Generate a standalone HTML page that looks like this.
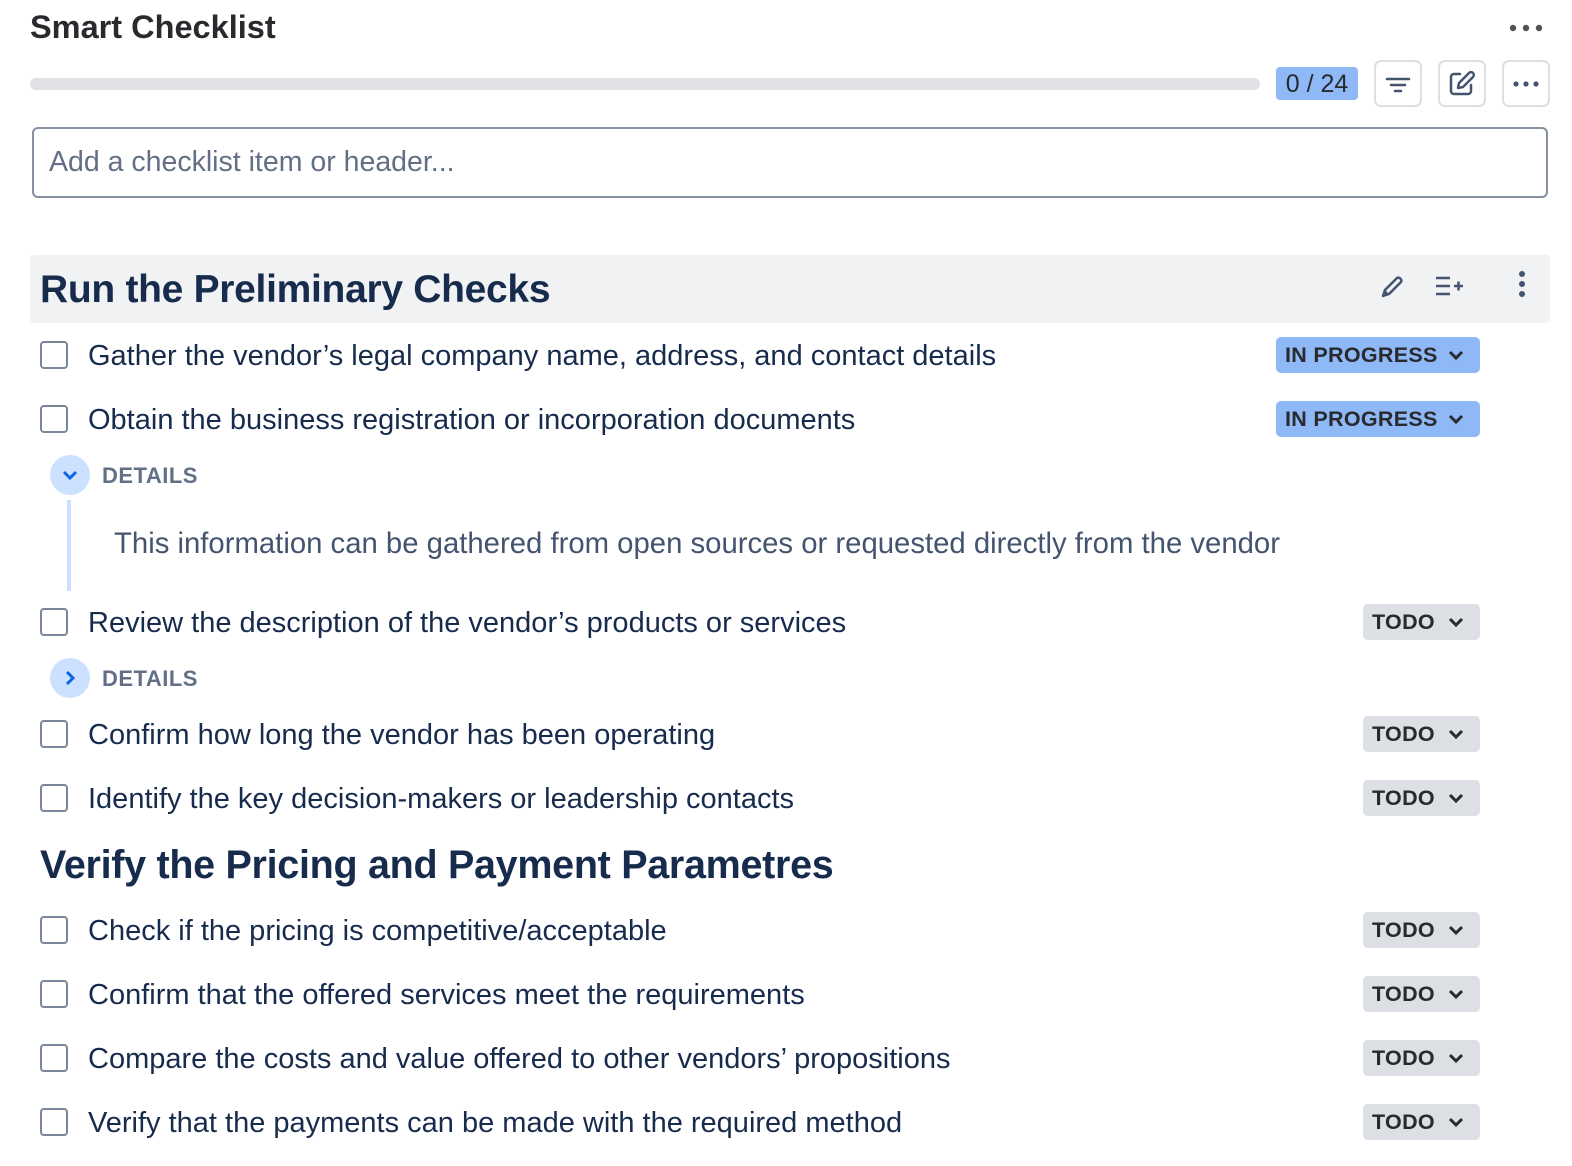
<!DOCTYPE html>
<html style="overflow:hidden"><head><meta charset="utf-8"><style>
*{box-sizing:border-box;margin:0;padding:0}
html,body{overflow:hidden}
body{width:1572px;height:1166px;background:#fff;font-family:"Liberation Sans",sans-serif;position:relative;color:#172b4d}
.a{position:absolute}
.t{position:absolute;left:88px;font-size:29px;line-height:38px;color:#172b4d;white-space:nowrap}
.cb{position:absolute;left:40px;width:28px;height:28px;border:2px solid #7a8699;border-radius:4px}
.bd{position:absolute;height:36px;border-radius:5px;font-weight:bold;font-size:21.5px;line-height:37px;color:#292a2e;padding-left:9px;letter-spacing:0.3px;white-space:nowrap}
.bd svg{position:absolute;right:16px;top:12px}
.todo{left:1363px;width:117px;background:#dcdfe4}
.ip{left:1276px;width:204px;background:#8fb8f6}
.btn{position:absolute;top:60px;width:48px;height:47px;border:2px solid #dcdfe4;border-radius:7px}
.det{position:absolute;left:102px;font-weight:bold;font-size:22px;color:#626f86;letter-spacing:0.5px;line-height:32px}
.circ{position:absolute;left:50px;width:40px;height:40px;border-radius:50%;background:#cce0ff}
h2{position:absolute;left:40px;font-size:39px;font-weight:bold;color:#172b4d;white-space:nowrap;letter-spacing:-0.3px}
</style></head><body>
<div class="a" style="left:30px;top:9px;font-size:32.5px;font-weight:bold;color:#292a2e">Smart Checklist</div>
<svg class="a" style="left:1506px;top:20px" width="40" height="16"><circle cx="7" cy="8" r="3.2" fill="#505258"/><circle cx="20" cy="8" r="3.2" fill="#505258"/><circle cx="33" cy="8" r="3.2" fill="#505258"/></svg>
<div class="a" style="left:30px;top:78px;width:1230px;height:12px;background:#dfe1e6;border-radius:6px"></div>
<div class="a" style="left:1276px;top:67px;width:82px;height:33px;background:#8fb8f6;border-radius:4px;font-size:25px;line-height:34px;text-align:center;color:#292a2e">0 / 24</div>
<div class="btn" style="left:1374px"><svg width="44" height="43"><path d="M11 17h22M15 23h14M19 29h6" stroke="#44546f" stroke-width="2.5" stroke-linecap="round"/></svg></div>
<div class="btn" style="left:1438px"><svg width="44" height="43"><path d="M20 12h-6a3 3 0 0 0-3 3v14a3 3 0 0 0 3 3h14a3 3 0 0 0 3-3v-6" fill="none" stroke="#44546f" stroke-width="2.5" stroke-linecap="round"/><path d="M18 26l1-5 10-10a2.5 2.5 0 0 1 4 4l-10 10z" fill="none" stroke="#44546f" stroke-width="2.5" stroke-linejoin="round"/></svg></div>
<div class="btn" style="left:1502px"><svg width="44" height="43"><circle cx="12" cy="22" r="2.6" fill="#44546f"/><circle cx="22" cy="22" r="2.6" fill="#44546f"/><circle cx="32" cy="22" r="2.6" fill="#44546f"/></svg></div>
<div class="a" style="left:32px;top:127px;width:1516px;height:71px;border:2px solid #8590a2;border-radius:6px;padding-left:15px;font-size:28.5px;line-height:66px;color:#626f86">Add a checklist item or header...</div>

<div class="a" style="left:30px;top:255px;width:1520px;height:68px;background:#f1f2f4;border-radius:4px"></div>
<h2 style="top:268px">Run the Preliminary Checks</h2>
<svg class="a" style="left:1378px;top:271px" width="30" height="30"><path d="M5 25l2-6L19 7a3 3 0 0 1 4 4L11 23z" fill="none" stroke="#44546f" stroke-width="2.5" stroke-linejoin="round"/><path d="M5 25l2-6 4 4z" fill="#44546f"/></svg>
<svg class="a" style="left:1434px;top:274px" width="30" height="24"><path d="M2 4h14M2 12h14M2 20h14M20 12h9M24.5 7.5v9" stroke="#44546f" stroke-width="2.5"/></svg>
<svg class="a" style="left:1514px;top:268px" width="16" height="32"><circle cx="8" cy="6" r="3" fill="#44546f"/><circle cx="8" cy="16" r="3" fill="#44546f"/><circle cx="8" cy="26" r="3" fill="#44546f"/></svg>

<div class="cb" style="top:341px"></div><div class="t" style="top:337px">Gather the vendor’s legal company name, address, and contact details</div>
<div class="bd ip" style="top:337px">IN PROGRESS<svg width="16" height="12"><path d="M2 3l6 6 6-6" fill="none" stroke="#292a2e" stroke-width="3"/></svg></div>
<div class="cb" style="top:405px"></div><div class="t" style="top:401px">Obtain the business registration or incorporation documents</div>
<div class="bd ip" style="top:401px">IN PROGRESS<svg width="16" height="12"><path d="M2 3l6 6 6-6" fill="none" stroke="#292a2e" stroke-width="3"/></svg></div>

<div class="circ" style="top:455px"><svg width="40" height="40"><path d="M14 17l6 6 6-6" fill="none" stroke="#0c66e4" stroke-width="3"/></svg></div>
<div class="det" style="top:460px">DETAILS</div>
<div class="a" style="left:67px;top:500px;width:4px;height:91px;background:#cce0ff"></div>
<div class="a" style="left:114px;top:525px;font-size:29.3px;line-height:38px;color:#44546f;white-space:nowrap">This information can be gathered from open sources or requested directly from the vendor</div>

<div class="cb" style="top:608px"></div><div class="t" style="top:604px">Review the description of the vendor’s products or services</div>
<div class="bd todo" style="top:604px">TODO<svg width="16" height="12"><path d="M2 3l6 6 6-6" fill="none" stroke="#292a2e" stroke-width="3"/></svg></div>
<div class="circ" style="top:658px"><svg width="40" height="40"><path d="M17 14l6 6-6 6" fill="none" stroke="#0c66e4" stroke-width="3"/></svg></div>
<div class="det" style="top:663px">DETAILS</div>

<div class="cb" style="top:720px"></div><div class="t" style="top:716px">Confirm how long the vendor has been operating</div>
<div class="bd todo" style="top:716px">TODO<svg width="16" height="12"><path d="M2 3l6 6 6-6" fill="none" stroke="#292a2e" stroke-width="3"/></svg></div>
<div class="cb" style="top:784px"></div><div class="t" style="top:780px">Identify the key decision-makers or leadership contacts</div>
<div class="bd todo" style="top:780px">TODO<svg width="16" height="12"><path d="M2 3l6 6 6-6" fill="none" stroke="#292a2e" stroke-width="3"/></svg></div>

<h2 style="top:843px;font-size:39.5px">Verify the Pricing and Payment Parametres</h2>

<div class="cb" style="top:916px"></div><div class="t" style="top:912px">Check if the pricing is competitive/acceptable</div>
<div class="bd todo" style="top:912px">TODO<svg width="16" height="12"><path d="M2 3l6 6 6-6" fill="none" stroke="#292a2e" stroke-width="3"/></svg></div>
<div class="cb" style="top:980px"></div><div class="t" style="top:976px">Confirm that the offered services meet the requirements</div>
<div class="bd todo" style="top:976px">TODO<svg width="16" height="12"><path d="M2 3l6 6 6-6" fill="none" stroke="#292a2e" stroke-width="3"/></svg></div>
<div class="cb" style="top:1044px"></div><div class="t" style="top:1040px">Compare the costs and value offered to other vendors’ propositions</div>
<div class="bd todo" style="top:1040px">TODO<svg width="16" height="12"><path d="M2 3l6 6 6-6" fill="none" stroke="#292a2e" stroke-width="3"/></svg></div>
<div class="cb" style="top:1108px"></div><div class="t" style="top:1104px">Verify that the payments can be made with the required method</div>
<div class="bd todo" style="top:1104px">TODO<svg width="16" height="12"><path d="M2 3l6 6 6-6" fill="none" stroke="#292a2e" stroke-width="3"/></svg></div>
</body></html>
